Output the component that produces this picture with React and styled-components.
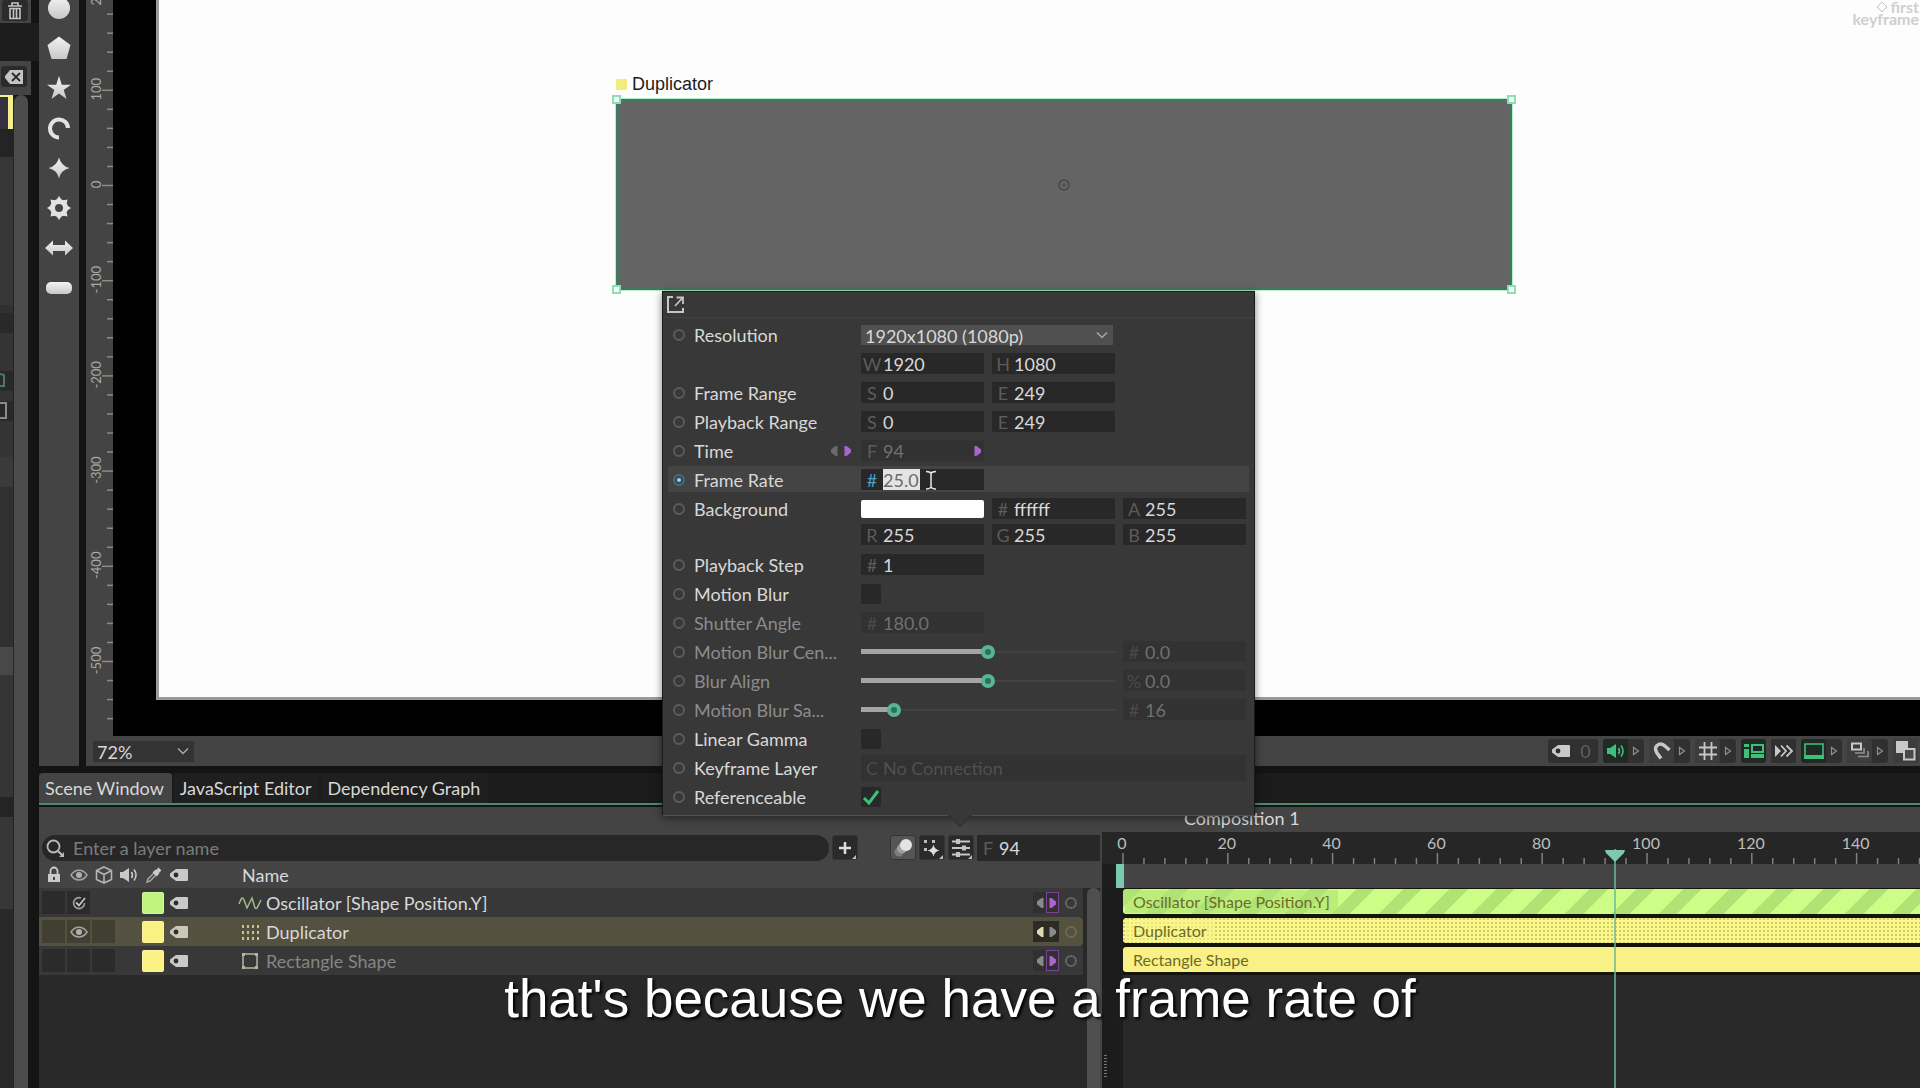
import React, { useState } from "react";
import styled, { createGlobalStyle, css } from "styled-components";

const c = {
  panel: "#444444",
  panelDark: "#383838",
  field: "#282828",
  fieldDim: "#323232",
  gap: "#141414",
  text: "#d8d8d8",
  dim: "#8c8c8c",
  faint: "#5c5c5c",
  green: "#3fc07a",
  teal: "#7cc9b0",
  purple: "#a964cf",
};

const Global = createGlobalStyle`
  *, *::before, *::after { box-sizing: border-box; }
  body { margin: 0; background: #141414; overflow: hidden; }
  button, input, select { font: inherit; color: inherit; margin: 0; padding: 0; border: 0; background: none; outline: 0; }
  button { display: inline-flex; align-items: center; justify-content: center; }
  svg { display: block; flex: none; }
`;

const Shell = styled.div`
  position: relative;
  display: grid;
  grid-template-columns: 39px 1fr;
  height: 100vh;
  overflow: hidden;
  background: ${c.gap};
  color: ${c.text};
  font-family: Lato, "Liberation Sans", sans-serif;
  font-size: 18px;
  line-height: 22px;
`;

/* ---------- left dock ---------- */
const Dock = styled.aside`
  display: flex;
  flex-direction: column;
  min-height: 0;
`;
const DockHeader = styled.div`
  display: flex;
  align-items: flex-start;
  width: 31px;
  height: ${(p) => p.$h}px;
  padding: ${(p) => p.$pad};
  background: ${c.panel};
`;
const DockGap = styled.div`
  height: 38px;
  background: #1d1d1d;
`;
const DockButton = styled.button`
  width: 26px;
  height: 21px;
  border-radius: 3px;
  background: #2b2b2b;
`;
const DockBody = styled.div`
  display: flex;
  flex: 1;
  width: 28px;
`;
const DockSlice = styled.div`
  display: flex;
  flex-direction: column;
  width: 14px;
  background: #292929;
  border-right: 1px solid #242424;
`;
const Slice = styled.div`
  flex: none;
  height: ${(p) => p.$h}px;
  background: ${(p) => p.$bg};
  border-right: ${(p) => (p.$edge ? `5px solid ${p.$edge}` : "0")};
  border-top: ${(p) => (p.$top ? `2px solid ${p.$top}` : "0")};
`;
const DockScroll = styled.div`
  width: 14px;
  border-radius: 7px 7px 0 0;
  background: #4c4c4c;
`;

/* ---------- main column ---------- */
const Main = styled.div`
  display: flex;
  flex-direction: column;
  min-width: 0;
  min-height: 0;
`;
const Viewer = styled.section`
  display: flex;
  flex: 1;
  gap: 7px;
  min-height: 0;
  padding-bottom: 7px;
`;
const ToolRail = styled.nav`
  width: 40px;
  overflow: hidden;
  background: ${c.panel};
`;
const ToolList = styled.div`
  display: flex;
  flex-direction: column;
  margin-top: -12px;
`;
const Tool = styled.button`
  height: 40px;
`;
const ViewerColumn = styled.div`
  display: flex;
  flex: 1;
  flex-direction: column;
  min-width: 0;
`;
const StageRow = styled.div`
  display: flex;
  flex: 1;
  min-height: 0;
`;
const VRuler = styled.div`
  width: 27px;
  overflow: hidden;
  background: ${c.panel};
`;
const Stage = styled.div`
  display: flex;
  flex: 1;
  padding: 0 0 36px 43px;
  background: #000;
`;
const Canvas = styled.div`
  position: relative;
  flex: 1;
  border: solid #9a9a9a;
  border-width: 0 0 3px 3px;
  background: #fdfdfd;
`;
const Shape = styled.div`
  position: absolute;
  left: 457px;
  top: 99px;
  width: 896px;
  height: 191px;
  border: 3px solid #467660;
  outline: 1px solid #b5f0d2;
  background: #646464;
`;
const Handle = styled.i`
  position: absolute;
  width: 9px;
  height: 9px;
  border: 2px solid #8fdcb5;
  background: #effff7;
  ${(p) => p.$y}: -7px;
  ${(p) => p.$x}: -7px;
`;
const ShapeLabel = styled.div`
  position: absolute;
  left: 457px;
  top: 73px;
  display: flex;
  align-items: center;
  gap: 5px;
  color: #1c1c1c;
  font-family: "Liberation Sans", Arial, sans-serif;
`;
const LabelChip = styled.i`
  width: 11px;
  height: 11px;
  background: #f1ec7c;
`;
const Pivot = styled.div`
  position: absolute;
  left: 50%;
  top: 45%;
  transform: translate(-50%, -50%);
`;
const Watermark = styled.div`
  position: absolute;
  right: 1px;
  top: 1px;
  display: flex;
  flex-direction: column;
  align-items: flex-end;
  color: #cfcfcf;
  font-size: 16px;
  font-weight: 700;
  line-height: 12px;
  span {
    display: flex;
    align-items: center;
    gap: 2px;
  }
`;

const StatusBar = styled.footer`
  display: flex;
  align-items: center;
  gap: 5px;
  height: 30px;
  padding: 0 2px 0 7px;
  background: ${c.panel};
`;
const SelectWrap = styled.label`
  display: grid;
  align-items: center;
  width: ${(p) => p.$w}px;
  height: ${(p) => p.$h}px;
  background: ${(p) => p.$bg};
  > * {
    grid-area: 1 / 1;
  }
  svg {
    justify-self: end;
    margin-right: 4px;
    pointer-events: none;
  }
`;
const Select = styled.select`
  appearance: none;
  width: 100%;
  height: 100%;
  padding-left: 4px;
`;
const Spacer = styled.div`
  flex: 1;
`;
const StatusGroup = styled.div`
  display: flex;
  height: 24px;
  border-radius: 3px;
  overflow: hidden;
  background: ${(p) => (p.$on ? "#1f2a24" : "#303030")};
`;
const StatusButton = styled.button`
  width: ${(p) => p.$w || 25}px;
  height: 24px;
  color: ${(p) => p.$color || "#c8c8c8"};
  background: ${(p) => (p.$raised ? "#3d3d3d" : "none")};
`;

/* ---------- bottom dock ---------- */
const Bottom = styled.section`
  display: flex;
  flex: none;
  flex-direction: column;
  height: 315px;
`;
const TabBar = styled.div`
  display: flex;
  gap: 2px;
  height: 32px;
  background: #1c1b1c;
  border-bottom: 2px solid #4d8a6c;
`;
const Tab = styled.button`
  padding: 0 8px 0 6px;
  border-radius: 4px 4px 0 0;
  background: ${(p) => (p.$active ? c.panel : "#1f1f1f")};
`;
const Panes = styled.div`
  display: grid;
  grid-template-columns: 1063fr 818fr;
  flex: 1;
  min-height: 0;
  margin-top: 2px;
`;
const Scene = styled.div`
  display: flex;
  flex-direction: column;
  min-width: 0;
  padding-right: 2px;
  background: ${c.panel};
`;
const Strip = styled.div`
  height: ${(p) => p.$h}px;
  padding: ${(p) => p.$pad || 0};
  background: ${c.panel};
`;
const SearchRow = styled.div`
  display: flex;
  align-items: center;
  gap: 3px;
  height: 27px;
  padding-left: 3px;
`;
const SearchBox = styled.label`
  display: flex;
  flex: 1;
  align-items: center;
  gap: 8px;
  height: 26px;
  padding-left: 3px;
  border-radius: 13px;
  background: #272727;
`;
const SearchInput = styled.input`
  flex: 1;
  min-width: 0;
  &::placeholder {
    color: #7c7c7c;
    opacity: 1;
  }
`;
const SquareButton = styled.button`
  width: 26px;
  height: 25px;
  border: 1px solid #343434;
  border-radius: 3px;
  background: ${(p) => (p.$lit ? "#555" : "#2a2a2a")};
  margin-left: ${(p) => (p.$apart ? 29 : 0)}px;
`;
const LayerHead = styled.div`
  display: flex;
  align-items: center;
  height: 27px;
  padding-left: 2px;
`;
const Cell = styled.div`
  display: flex;
  justify-content: center;
  align-items: center;
  flex: none;
  width: 25px;
  height: 25px;
`;
const ToggleCell = styled.button`
  flex: none;
  width: 23px;
  height: 23px;
  margin: 0 1px;
  background: ${(p) => (p.$show ? "rgba(0,0,0,.22)" : "none")};
`;
const HeadName = styled.span`
  margin-left: 51px;
`;
const ListArea = styled.div`
  display: flex;
  flex: 1;
  background: #292929;
`;
const List = styled.div`
  flex: 1;
`;
const ListScroll = styled.div`
  width: 13px;
  margin-left: 4px;
  border-radius: 6px 6px 0 0;
  background: #4f4f4f;
`;
const LayerRow = styled.div`
  display: flex;
  align-items: center;
  height: 29px;
  padding-left: 2px;
  color: ${(p) => (p.$dim ? "#858585" : c.text)};
  background: ${(p) => (p.$selected ? "#545141" : c.panelDark)};
  border-radius: ${(p) => (p.$selected ? "0 4px 4px 0" : 0)};
`;
const Swatch = styled.button`
  flex: none;
  width: 22px;
  height: 22px;
  margin: 0 2px 0 1px;
  border: 1px solid rgba(255, 255, 255, 0.25);
  border-radius: 2px;
  background: ${(p) => p.$color};
`;
const LayerIcon = styled.span`
  display: flex;
  justify-content: center;
  width: 24px;
  margin: 0 4px 0 47px;
`;
const LayerName = styled.span`
  flex: 1;
  white-space: nowrap;
`;
const KeyNav = styled.div`
  display: flex;
  margin-right: 6px;
`;
const KeyButton = styled.button`
  width: 13px;
  height: 21px;
  border: 1px solid ${(p) => (p.$ring ? "#7b4596" : "transparent")};
  color: ${(p) => p.$color || "#8a8a8a"};
  background: ${(p) => (p.$dark ? "#2b2a24" : "#303030")};
`;
const RingButton = styled.button`
  flex: none;
  width: 12px;
  height: 12px;
  margin-right: ${(p) => p.$mr || 0}px;
  border: 2px solid ${(p) => p.$color || "#646464"};
  border-radius: 50%;
`;

/* ---------- timeline ---------- */
const Timeline = styled.div`
  position: relative;
  display: flex;
  flex-direction: column;
  min-width: 0;
  overflow: hidden;
  background: #292929;
`;
const HRuler = styled.div`
  height: 32px;
  background: #262626;
`;
const WorkArea = styled.div`
  display: flex;
  height: 24px;
  padding-left: 14px;
  background: linear-gradient(90deg, #1d1d1d 14px, ${c.panel} 14px);
  i {
    width: 8px;
    height: 24px;
    background: ${c.teal};
  }
`;
const Tracks = styled.div`
  display: flex;
  flex: 1;
`;
const Gutter = styled.div`
  display: flex;
  flex-direction: column;
  justify-content: flex-end;
  width: 21px;
  padding: 0 0 9px 2px;
  background: #1c1c1c;
  span {
    height: 24px;
    width: 3px;
    background: repeating-linear-gradient(#777 0 1px, transparent 1px 3px);
  }
`;
const Bars = styled.div`
  display: flex;
  flex: 1;
  flex-direction: column;
`;
const BarSlot = styled.div`
  height: 29px;
  padding-top: 1px;
  background: #14150c;
`;
const patterns = {
  stripes: css`
    background: repeating-linear-gradient(135deg, #b0e373 0 13px, #cdfd87 13px 33px);
  `,
  dots: css`
    background: radial-gradient(circle at 1px 1px, #cfca6a 1px, transparent 1px) 0 0 / 4px 4px, #fbf88a;
  `,
  plain: css`
    background: #f9f086;
  `,
};
const Bar = styled.div`
  display: flex;
  align-items: center;
  height: 25px;
  padding-left: 2px;
  border-radius: 3px 0 0 3px;
  font-size: 16px;
  color: #6c6b2c;
  ${(p) => patterns[p.$fill]}
  span {
    padding: 0 8px;
    line-height: 23px;
    background: ${(p) => p.$tint};
  }
`;
const Playhead = styled.div`
  position: absolute;
  top: 42px;
  bottom: 0;
  width: 20px;
  margin-left: -11px;
  pointer-events: none;
  background: linear-gradient(90deg, transparent 9px, rgba(108, 184, 158, 0.75) 9px 11px, transparent 11px);
`;

/* ---------- settings popover ---------- */
const Popover = styled.div`
  position: absolute;
  left: 662px;
  top: 291px;
  width: 593px;
  padding-bottom: 4px;
  border: 1px solid #1a1a1a;
  border-bottom-color: #505050;
  background: ${c.panelDark};
  box-shadow: 0 2px 8px rgba(0, 0, 0, 0.5);
`;
const PopoverHead = styled.div`
  display: flex;
  align-items: center;
  height: 26px;
  margin-bottom: 2px;
  padding-left: 3px;
  border-bottom: 1px solid #424242;
`;
const PopoverTip = styled.div`
  position: absolute;
  top: 100%;
  left: 50%;
  margin-left: -11px;
`;
const Prop = styled.div`
  display: grid;
  grid-template-columns: 21px 167px 1fr;
  align-items: ${(p) => (p.$tight ? "start" : "center")};
  height: ${(p) => (p.$tight ? 27 : 29)}px;
  margin: 0 5px;
  padding: ${(p) => (p.$tight ? "1px 5px 0" : "0 5px")};
  border-radius: 3px;
  color: ${(p) => (p.$dim ? c.dim : c.text)};
  background: ${(p) => (p.$hot ? "linear-gradient(transparent 1px, #444 1px 27px, transparent 27px)" : "none")};
`;
const PropName = styled.span`
  display: flex;
  align-items: center;
  justify-content: space-between;
  padding-right: 7px;
  white-space: nowrap;
`;
const Hints = styled.span`
  display: flex;
  gap: 4px;
`;
const Controls = styled.div`
  display: grid;
  grid-template-columns: repeat(3, 123px);
  align-items: center;
  gap: 8px;
`;
const FieldBox = styled.label`
  display: flex;
  align-items: center;
  grid-column: ${(p) => p.$col || "auto"};
  width: ${(p) => (p.$w ? `${p.$w}px` : "auto")};
  height: ${(p) => p.$h || 21}px;
  color: ${(p) => (p.$dim ? "#707070" : c.text)};
  background: ${(p) => (p.$dim ? c.fieldDim : c.field)};
`;
const Prefix = styled.span`
  flex: none;
  width: 22px;
  text-align: center;
  color: ${(p) => p.$color || c.faint};
`;
const FieldInput = styled.input`
  flex: ${(p) => (p.$selected ? "0 0 37px" : 1)};
  min-width: 0;
  width: 37px;
  height: 21px;
  color: ${(p) => p.$color || "inherit"};
  ${(p) =>
    p.$selected &&
    css`
      color: #6a6a6a;
      background: #e4e4e4;
    `}
`;
const ColorWell = styled.button`
  height: 18px;
  border-radius: 2px;
  background: #fff;
`;
const CheckWrap = styled.span`
  display: grid;
  width: 20px;
  height: 20px;
  > * {
    grid-area: 1 / 1;
  }
  svg {
    pointer-events: none;
  }
`;
const Check = styled.input`
  appearance: none;
  width: 20px;
  height: 20px;
  border-radius: 2px;
  background: ${c.field};
`;
const Slider = styled.input`
  appearance: none;
  grid-column: span 2;
  width: 100%;
  height: 16px;
  background:
    linear-gradient(#a4a4a4, #a4a4a4) 0 50% / ${(p) => p.$fill}px 5px no-repeat,
    linear-gradient(#424242, #424242) 0 50% / 100% 2px no-repeat;
  &::-webkit-slider-thumb {
    appearance: none;
    width: 14px;
    height: 14px;
    border: 4px solid #58b493;
    border-radius: 50%;
    background: #2f6f58;
  }
`;

const Caption = styled.p`
  position: absolute;
  left: 0;
  right: 0;
  bottom: 59px;
  margin: 0;
  color: #fff;
  font-family: "Liberation Sans", Arial, sans-serif;
  font-size: 53px;
  line-height: 60px;
  text-align: center;
  text-shadow: 2px 2px 3px #000;
  pointer-events: none;
`;

/* ---------- drawings ---------- */
const Svg = ({ w = 20, h = w, vb, children }) => (
  <svg width={w} height={h} viewBox={vb || `0 0 ${w} ${h}`} fill="none" aria-hidden="true">
    {children}
  </svg>
);
const TagIcon = ({ color = "#c9c9c9" }) => (
  <Svg w={20} h={14}>
    <path d="M7 1h11a1 1 0 0 1 1 1v10a1 1 0 0 1-1 1H7L1 8.500v-3z" fill={color} />
    <circle cx="7" cy="7" r="2.4" fill="#2c2c2c" />
  </Svg>
);
const EyeIcon = () => (
  <Svg w={18} h={14}>
    <path d="M1 7c4-6.500 12-6.500 16 0-4 6.500-12 6.500-16 0z" stroke="#a4a4a4" strokeWidth="1.500" />
    <circle cx="9" cy="7" r="3" fill="#b0b0b0" />
  </Svg>
);
const EyeCheckIcon = () => (
  <Svg w={16}>
    <path d="M13.500 8A5.500 5.500 0 1 1 10 3" stroke="#a2a2a2" strokeWidth="1.600" />
    <path d="M5 7.500l3 3L14 3" stroke="#c4c4c4" strokeWidth="1.800" />
  </Svg>
);
const SpeakerIcon = ({ color = "#c9c9c9" }) => (
  <Svg w={20} h={18}>
    <path d="M1 6h3l6-4v14l-6-4H1z" fill={color} />
    <path d="M12.500 6q2 3 0 6M15 3.500q4 5.500 0 11" stroke={color} strokeWidth="1.600" />
  </Svg>
);
const LeftKey = () => (
  <Svg w={8} h={12}>
    <path d="M7.500 1v10H5.500L1 7.500v-3L5.500 1z" fill="currentColor" />
  </Svg>
);
const RightKey = () => (
  <Svg w={8} h={12}>
    <path d="M.5 1v10h2L7 7.500v-3L2.500 1z" fill="currentColor" />
  </Svg>
);
const Chevron = () => (
  <Svg w={14} h={9}>
    <path d="M2 1.500l5 5 5-5" stroke="#a8a8a8" strokeWidth="1.500" />
  </Svg>
);
const MenuArrow = () => (
  <Svg w={8} h={10}>
    <path d="M1.500 1.500v7L6.500 5z" stroke="#8e8e8e" strokeWidth="1.200" />
  </Svg>
);

const toolShapes = [
  ["Ellipse", <circle cx="14" cy="12" r="11" fill="url(#tool)" />],
  ["Polygon", <path d="M14 .5l11.500 8.500-4 14H6.500l-4-14z" fill="url(#tool)" />],
  ["Star", <path d="M14 0l2.800 8.700H26l-7.300 5.300 2.900 9L14 17.500 6.400 23l2.900-9L2 8.700h9.200z" fill="url(#tool)" />],
  ["Arc", <path d="M14 21.500A9 9 0 1 1 23 12" stroke="#e2e2e2" strokeWidth="4" />],
  ["Spark", <path d="M14 1.500q2 8.500 10.500 10.500Q16 14 14 22.500 12 14 3.500 12 12 10 14 1.500z" fill="url(#tool)" />],
  [
    "Cog",
    <>
      <circle cx="14" cy="12" r="6.500" stroke="#e2e2e2" strokeWidth="5" />
      {[0, 45, 90, 135, 180, 225, 270, 315].map((a) => (
        <path key={a} d="M11 4.500L14 0l3 4.500z" fill="#e2e2e2" transform={`rotate(${a} 14 12)`} />
      ))}
    </>,
  ],
  ["Arrow", <path d="M0 12l8-7.500V9h12V4.500L28 12l-8 7.500V15H8v4.500z" fill="url(#tool)" />],
  ["Capsule", <rect x="1" y="6" width="26" height="12" rx="5" fill="url(#tool)" />],
];

function Tools() {
  return (
    <ToolRail aria-label="Shape tools">
      <ToolList>
        {toolShapes.map(([name, art]) => (
          <Tool key={name} aria-label={name}>
            <Svg w={28} h={24}>
              <defs>
                <linearGradient id="tool" x1="0" y1="0" x2="0" y2="1">
                  <stop offset="0" stopColor="#f2f2f2" />
                  <stop offset="1" stopColor="#c8c8c8" />
                </linearGradient>
              </defs>
              {art}
            </Svg>
          </Tool>
        ))}
      </ToolList>
    </ToolRail>
  );
}

function VerticalRuler() {
  const at = (v) => 185.5 - v * 0.952;
  const ticks = [];
  for (let v = 180; v >= -560; v -= 20) ticks.push(v);
  return (
    <VRuler>
      <svg width="27" height="736">
        {ticks.map((v) => (
          <line key={v} x1={v % 100 ? 21 : 16} x2="27" y1={at(v)} y2={at(v)} stroke="#8b8b8b" strokeWidth="1.500" />
        ))}
        {[200, 100, 0, -100, -200, -300, -400, -500].map((v) => (
          <text
            key={v}
            transform={`translate(15 ${at(v) - 1}) rotate(-90)`}
            textAnchor="middle"
            fontSize="13"
            fill="#a9a9a9"
          >
            {v}
          </text>
        ))}
      </svg>
    </VRuler>
  );
}

function HorizontalRuler() {
  const at = (f) => 21 + f * 5.24;
  const ticks = [];
  for (let f = 0; f <= 240; f += 4) ticks.push(f);
  return (
    <HRuler>
      <svg width="100%" height="32">
        {ticks.map((f) => (
          <line key={f} x1={at(f)} x2={at(f)} y1={f % 20 ? 26 : 21} y2="32" stroke="#808080" strokeWidth="1.500" />
        ))}
        {ticks
          .filter((f) => f % 20 === 0)
          .map((f) => (
            <text key={f} x={at(f) - 1} y="17" textAnchor="middle" fontSize="16" fill="#bdbdbd">
              {f}
            </text>
          ))}
      </svg>
    </HRuler>
  );
}

function Field({ prefix, value, name, dim, col, w, h, hot, color }) {
  return (
    <FieldBox $dim={dim} $col={col} $w={w} $h={h}>
      <Prefix $color={hot ? "#4a9fc4" : dim ? "#4a4a4a" : undefined}>{prefix}</Prefix>
      <FieldInput aria-label={name} defaultValue={value} $selected={hot} $color={color} />
      {hot && (
        <Svg w={24} h={20}>
          <path d="M6 1.500q4 0 5 2 1-2 5-2M6 19q4 0 5-2 1 2 5 2M11 3v14" stroke="#e6e6e6" strokeWidth="1.500" />
        </Svg>
      )}
    </FieldBox>
  );
}

function Row({ label, children, hints, on, ...rest }) {
  return (
    <Prop {...rest}>
      {label ? (
        <RingButton aria-label={`Key ${label}`} $color={on ? "#3c6f84" : "#5c5c5c"}>
          {on && (
            <Svg w={6}>
              <circle cx="3" cy="3" r="2" fill="#8fd6ea" />
            </Svg>
          )}
        </RingButton>
      ) : (
        <span />
      )}
      <PropName>
        {label}
        {hints}
      </PropName>
      <Controls>{children}</Controls>
    </Prop>
  );
}

function Tick({ name, initial }) {
  const [on, setOn] = useState(initial);
  return (
    <CheckWrap>
      <Check type="checkbox" aria-label={name} checked={on} onChange={() => setOn(!on)} />
      {on && (
        <Svg w={20}>
          <path d="M3 11l5 5L17 4" stroke={c.green} strokeWidth="3" />
        </Svg>
      )}
    </CheckWrap>
  );
}

function SlideRow({ label, at, prefix, value }) {
  const [v, setV] = useState(at);
  return (
    <Row label={label} $dim>
      <Slider
        type="range"
        aria-label={label}
        value={v}
        onChange={(e) => setV(Number(e.target.value))}
        $fill={Math.round(7 + v * 2.39)}
      />
      <Field prefix={prefix} value={value} name={`${label} value`} dim />
    </Row>
  );
}

const PurpleKey = styled.span`
  display: flex;
  margin-left: auto;
  padding-right: 2px;
  color: ${(p) => p.$color || c.purple};
`;

function Settings() {
  return (
    <Popover role="dialog" aria-label="Composition settings">
      <PopoverHead>
        <button aria-label="Open in window">
          <Svg w={19}>
            <path d="M7 2H2v15h15v-4" stroke="#c6c6c6" strokeWidth="2" />
            <path d="M9 11l7-7.500M10.500 2.500h6.500V9" stroke="#c6c6c6" strokeWidth="1.800" />
          </Svg>
        </button>
      </PopoverHead>
      <Row label="Resolution">
        <SelectWrap $w={252} $h={20} $bg="#505050">
          <Select aria-label="Resolution" defaultValue="1080p">
            <option value="1080p">1920x1080 (1080p)</option>
          </Select>
          <Chevron />
        </SelectWrap>
      </Row>
      <Row>
        <Field prefix="W" value="1920" name="Width" />
        <Field prefix="H" value="1080" name="Height" />
      </Row>
      <Row label="Frame Range">
        <Field prefix="S" value="0" name="Range start" />
        <Field prefix="E" value="249" name="Range end" />
      </Row>
      <Row label="Playback Range">
        <Field prefix="S" value="0" name="Playback start" />
        <Field prefix="E" value="249" name="Playback end" />
      </Row>
      <Row
        label="Time"
        hints={
          <Hints>
            <PurpleKey $color="#6a6a6a">
              <LeftKey />
            </PurpleKey>
            <PurpleKey>
              <RightKey />
            </PurpleKey>
          </Hints>
        }
      >
        <FieldBox $dim>
          <Prefix>F</Prefix>
          <FieldInput aria-label="Time" defaultValue="94" />
          <PurpleKey>
            <RightKey />
          </PurpleKey>
        </FieldBox>
      </Row>
      <Row label="Frame Rate" $hot on>
        <Field prefix="#" value="25.0" name="Frame Rate" hot />
      </Row>
      <Row label="Background">
        <ColorWell aria-label="Background colour" />
        <Field prefix="#" value="ffffff" name="Hex" />
        <Field prefix="A" value="255" name="Alpha" />
      </Row>
      <Row $tight>
        <Field prefix="R" value="255" name="Red" />
        <Field prefix="G" value="255" name="Green" />
        <Field prefix="B" value="255" name="Blue" />
      </Row>
      <Row label="Playback Step">
        <Field prefix="#" value="1" name="Playback Step" />
      </Row>
      <Row label="Motion Blur">
        <Tick name="Motion Blur" initial={false} />
      </Row>
      <Row label="Shutter Angle" $dim>
        <Field prefix="#" value="180.0" name="Shutter Angle" dim />
      </Row>
      <SlideRow label="Motion Blur Cen..." at={50} prefix="#" value="0.0" />
      <SlideRow label="Blur Align" at={50} prefix="%" value="0.0" />
      <SlideRow label="Motion Blur Sa..." at={11} prefix="#" value="16" />
      <Row label="Linear Gamma">
        <Tick name="Linear Gamma" initial={false} />
      </Row>
      <Row label="Keyframe Layer">
        <Field prefix="C" value="No Connection" name="Keyframe Layer" dim col="span 3" h={26} color="#505050" />
      </Row>
      <Row label="Referenceable">
        <Tick name="Referenceable" initial />
      </Row>
      <PopoverTip>
        <Svg w={24} h={12}>
          <path d="M0 0h24L12 12z" fill={c.panelDark} />
          <path d="M0 0l12 11L24 0" stroke="#2c2c2c" />
        </Svg>
      </PopoverTip>
    </Popover>
  );
}

const statusGroups = [
  {
    name: "Sound",
    on: true,
    icon: <SpeakerIcon color={c.green} />,
    menu: true,
  },
  {
    name: "Snapping",
    raised: true,
    icon: (
      <Svg w={20}>
        <path d="M9 17.500L5 12Q1.500 6 6.500 3.500q3.500-1.500 7 2L17.500 9" stroke="currentColor" strokeWidth="3.500" />
      </Svg>
    ),
    menu: true,
  },
  {
    name: "Grid",
    raised: true,
    icon: (
      <Svg w={20}>
        <path d="M6.500 1v18M13.500 1v18M1 6.500h18M1 13.500h18" stroke="currentColor" strokeWidth="1.800" />
      </Svg>
    ),
    menu: true,
  },
  {
    name: "Layout",
    on: true,
    icon: (
      <Svg w={22} h={18}>
        <path d="M1 2h5v3H1zM1 7h5v9H1zM8 12h13v4H8z" fill={c.green} />
        <path d="M9 3h11v7H9z" stroke={c.green} strokeWidth="2" />
      </Svg>
    ),
  },
  {
    name: "Fast draw",
    icon: (
      <Svg w={20} h={14}>
        <path d="M1 1l6 6-6 6z" fill="currentColor" />
        <path d="M7 1.500L12 7l-5 5.500M12.500 1.500L18 7l-5.500 5.500" stroke="currentColor" strokeWidth="1.800" />
      </Svg>
    ),
  },
  {
    name: "Screen",
    on: true,
    icon: (
      <Svg w={22} h={18}>
        <path d="M2 2h18v12H2z" stroke={c.green} strokeWidth="1.600" />
        <path d="M1 13h20v4H1z" fill={c.green} />
      </Svg>
    ),
    menu: true,
  },
  {
    name: "Layers",
    raised: true,
    icon: (
      <Svg w={20} h={18}>
        <path d="M2 1.500h9v6H2z" stroke="currentColor" strokeWidth="2" />
        <path d="M5 11h9V6M8 14.500h10V9" stroke="#909090" strokeWidth="1.600" />
      </Svg>
    ),
    menu: true,
  },
  {
    name: "Channels",
    raised: true,
    icon: (
      <Svg w={20}>
        <path d="M0 0h12v12H0z" fill="currentColor" />
        <path d="M8 8h10.500v10.500H8z" fill="#4a4a4a" stroke="currentColor" strokeWidth="2" />
      </Svg>
    ),
  },
];

const TagCount = styled.span`
  width: 25px;
  text-align: center;
  line-height: 24px;
  color: #5f5f5f;
`;

const layers = [
  {
    name: "Oscillator [Shape Position.Y]",
    color: "#bff57f",
    eye: <EyeCheckIcon />,
    cells: 2,
    fill: "stripes",
    tint: "rgba(176,227,115,.6)",
    icon: (
      <Svg w={24} h={16}>
        <path d="M1 9q2-5 3-6 1-.5 2 2l3 8 5-10 3 10q1 1 2 0l4-8" stroke="#a3b98a" strokeWidth="1.500" />
      </Svg>
    ),
  },
  {
    name: "Duplicator",
    color: "#fbf183",
    eye: <EyeIcon />,
    cells: 3,
    selected: true,
    fill: "dots",
    tint: "rgba(249,247,138,.6)",
    icon: (
      <Svg w={18}>
        {[2, 7, 12, 17].map((x) =>
          [3, 9, 15].map((y) => <rect key={`${x}-${y}`} x={x - 1} y={y - 1} width="2" height="3" fill="#c9c67c" />)
        )}
      </Svg>
    ),
  },
  {
    name: "Rectangle Shape",
    color: "#fbf183",
    cells: 3,
    dim: true,
    fill: "plain",
    tint: "none",
    icon: (
      <Svg w={18}>
        <path d="M2 2h14v14H2z" stroke="#b5b5a0" strokeWidth="1.500" />
        <path d="M1 1h3v3H1zM14 1h3v3h-3zM1 14h3v3H1zM14 14h3v3h-3z" fill="#b5b5a0" />
      </Svg>
    ),
  },
];

function SceneWindow() {
  return (
    <Scene>
      <Strip $h={27} />
      <SearchRow>
        <SearchBox>
          <Svg w={20}>
            <circle cx="8.500" cy="8.500" r="6" stroke="#b8b8b8" strokeWidth="1.800" />
            <path d="M13 13l4 4" stroke="#b8b8b8" strokeWidth="2" />
            <path d="M19 14v5h-5z" fill="#b8b8b8" />
          </Svg>
          <SearchInput aria-label="Search layers" placeholder="Enter a layer name" />
        </SearchBox>
        <SquareButton aria-label="Add layer">
          <Svg w={24}>
            <path d="M12 6v12M6 12h12" stroke="#dedede" strokeWidth="2.500" />
            <path d="M23 19v4h-4z" fill="#bbb" />
          </Svg>
        </SquareButton>
        <SquareButton aria-label="Motion blur" $apart $lit>
          <Svg w={22}>
            <circle cx="7" cy="15" r="4.500" fill="#7c7c7c" />
            <circle cx="10" cy="11.500" r="5" fill="#a0a0a0" />
            <circle cx="14" cy="8" r="6" fill="#e4e4e4" />
          </Svg>
        </SquareButton>
        <SquareButton aria-label="Add effect">
          <Svg w={24}>
            <path d="M4 4h3v3H4zM12 4h3v3h-3zM4 12h3v3H4z" fill="#bcbcbc" />
            <path d="M13.500 8.500q1 5 6 6-5 1-6 6-1-5-6-6 5-1 6-6z" fill="#dedede" />
            <path d="M23 19v4h-4z" fill="#bbb" />
          </Svg>
        </SquareButton>
        <SquareButton aria-label="Composition settings">
          <Svg w={24}>
            <path d="M3 5.500h18M3 12h18M3 18.500h18" stroke="#c4c4c4" strokeWidth="2" />
            <path d="M7 3h4v5H7zM13 9.500h4v5h-4zM7 16h4v5H7z" fill="#c4c4c4" />
            <path d="M23 19v4h-4z" fill="#bbb" />
          </Svg>
        </SquareButton>
        <Field prefix="F" value="94" name="Current frame" w={123} h={26} />
      </SearchRow>
      <LayerHead>
        <Cell>
          <Svg w={14} h={18}>
            <path d="M3.500 8V5a3.500 3.500 0 0 1 7 0v3" stroke="#c9c9c9" strokeWidth="1.800" />
            <path d="M1 8h12v8H1z" fill="#c9c9c9" />
            <path d="M6 11h2v3H6z" fill="#444" />
          </Svg>
        </Cell>
        <Cell>
          <EyeIcon />
        </Cell>
        <Cell>
          <Svg w={18}>
            <path d="M9 1l7.500 3.500v9L9 17l-7.500-3.500v-9zM1.500 4.500L9 8.500l7.500-4M9 8.500V17" stroke="#b4b4b4" strokeWidth="1.600" />
          </Svg>
        </Cell>
        <Cell>
          <SpeakerIcon />
        </Cell>
        <Cell>
          <Svg w={18}>
            <path d="M2 16l1-3 6-6 2 2-6 6z" stroke="#a4a4a4" strokeWidth="1.500" />
            <path d="M9 5l4 4M11 7l4-4" stroke="#c9c9c9" strokeWidth="4" />
          </Svg>
        </Cell>
        <Cell>
          <TagIcon />
        </Cell>
        <HeadName>Name</HeadName>
      </LayerHead>
      <ListArea>
        <List>
          {layers.map((l) => (
            <LayerRow key={l.name} $dim={l.dim} $selected={l.selected}>
              <ToggleCell $show aria-label={`Lock ${l.name}`} />
              <ToggleCell $show aria-label={`Show ${l.name}`}>
                {l.eye}
              </ToggleCell>
              <ToggleCell $show={l.cells > 2} aria-label={`Solo ${l.name}`} />
              <Cell />
              <Swatch $color={l.color} aria-label={`Colour ${l.name}`} />
              <Cell>
                <TagIcon color={l.selected ? "#c9c8b6" : "#c9c9c9"} />
              </Cell>
              <LayerIcon>{l.icon}</LayerIcon>
              <LayerName>{l.name}</LayerName>
              <KeyNav>
                <KeyButton aria-label="Previous key" $dark={l.selected} $color={l.selected ? "#dedcae" : undefined}>
                  <LeftKey />
                </KeyButton>
                <KeyButton
                  aria-label="Next key"
                  $dark={l.selected}
                  $ring={!l.selected}
                  $color={l.selected ? undefined : c.purple}
                >
                  <RightKey />
                </KeyButton>
              </KeyNav>
              <RingButton aria-label="Connections" $mr={6} $color={l.selected ? "#6e6a4c" : undefined} />
            </LayerRow>
          ))}
        </List>
        <ListScroll />
      </ListArea>
    </Scene>
  );
}

function TimelinePane() {
  const frame = 94;
  return (
    <Timeline>
      <Strip $h={25} $pad="0 0 0 82px">
        Composition 1
      </Strip>
      <HorizontalRuler />
      <WorkArea>
        <i />
      </WorkArea>
      <Tracks>
        <Gutter>
          <span />
        </Gutter>
        <Bars>
          {layers.map((l) => (
            <BarSlot key={l.name}>
              <Bar $fill={l.fill} $tint={l.tint}>
                <span>{l.name}</span>
              </Bar>
            </BarSlot>
          ))}
        </Bars>
      </Tracks>
      <Playhead style={{ left: 21 + frame * 5.24 }}>
        <Svg w={20} h={14}>
          <path d="M0 1h20l-1 3-9 9L1 4z" fill={c.teal} />
        </Svg>
      </Playhead>
    </Timeline>
  );
}

function LeftDock() {
  return (
    <Dock>
      <DockHeader $h={23} $pad="0 0 0 2px">
        <DockButton aria-label="Delete">
          <Svg w={16} h={18}>
            <path d="M1 4h14M5 3.500V1h6v2.500" stroke="#c4c4c4" strokeWidth="1.600" />
            <path d="M3 6.500h10v10H3zM6.500 7v9M9.500 7v9" stroke="#c4c4c4" strokeWidth="1.600" />
          </Svg>
        </DockButton>
      </DockHeader>
      <DockGap />
      <DockHeader $h={34} $pad="5px 0 0 1px">
        <DockButton aria-label="Clear search">
          <Svg w={20} h={16}>
            <path d="M6 1h13v14H6L1 9V7z" fill="#c4c4c4" />
            <path d="M8 4l8 8M16 4l-8 8" stroke="#2b2b2b" strokeWidth="1.800" />
          </Svg>
        </DockButton>
      </DockHeader>
      <DockBody>
        <DockSlice>
          <Slice $h={34} $bg="#34303f" $edge="#f4f08d" $top="#f4f08d" />
          <Slice $h={28} $bg="#242424" />
          <Slice $h={148} $bg="#373737" />
          <Slice $h={8} $bg="#303030" />
          <Slice $h={20} $bg="#292929" />
          <Slice $h={38} $bg="#343434" />
          <Svg w={13} h={20}>
            <path d="M0 3l4 1v11H0" stroke="#4d7a5d" strokeWidth="2" />
          </Svg>
          <Slice $h={10} $bg="#343434" />
          <Svg w={13} h={20}>
            <path d="M0 2h6v15H0" stroke="#8b8b8b" strokeWidth="2" />
          </Svg>
          <Slice $h={36} $bg="#343434" />
          <Slice $h={30} $bg="#3a3a3a" />
          <Slice $h={160} $bg="#303030" />
          <Slice $h={28} $bg="#484848" />
          <Slice $h={122} $bg="#353535" />
          <Slice $h={20} $bg="#242424" />
          <Slice $h={92} $bg="#373737" />
        </DockSlice>
        <DockScroll />
      </DockBody>
    </Dock>
  );
}

export default function App() {
  return (
    <Shell>
      <Global />
      <LeftDock />
      <Main>
        <Viewer>
          <Tools />
          <ViewerColumn>
            <StageRow>
              <VerticalRuler />
              <Stage>
                <Canvas>
                  <ShapeLabel>
                    <LabelChip />
                    Duplicator
                  </ShapeLabel>
                  <Shape>
                    <Handle $x="left" $y="top" />
                    <Handle $x="right" $y="top" />
                    <Handle $x="left" $y="bottom" />
                    <Handle $x="right" $y="bottom" />
                    <Pivot>
                      <Svg w={14}>
                        <circle cx="7" cy="7" r="5" stroke="#474747" strokeWidth="1.500" />
                        <path d="M5 7h4M7 5v4" stroke="#4d4d4d" />
                      </Svg>
                    </Pivot>
                  </Shape>
                  <Watermark>
                    <span>
                      <Svg w={12}>
                        <path d="M6 1l5 5-5 5-5-5z" stroke="#c4c4c4" />
                      </Svg>
                      first
                    </span>
                    <span>keyframe</span>
                  </Watermark>
                </Canvas>
              </Stage>
            </StageRow>
            <StatusBar>
              <SelectWrap $w={101} $h={21} $bg="#333333">
                <Select aria-label="Zoom" defaultValue="72">
                  <option value="72">72%</option>
                </Select>
                <Chevron />
              </SelectWrap>
              <Spacer />
              <StatusGroup>
                <StatusButton aria-label="Tag filter">
                  <TagIcon />
                </StatusButton>
                <TagCount>0</TagCount>
              </StatusGroup>
              {statusGroups.map((g) => (
                <StatusGroup key={g.name}>
                  <StatusGroup $on={g.on}>
                    <StatusButton aria-label={g.name} $raised={g.raised}>
                      {g.icon}
                    </StatusButton>
                  </StatusGroup>
                  {g.menu && (
                    <StatusButton aria-label={`${g.name} options`} $w={16}>
                      <MenuArrow />
                    </StatusButton>
                  )}
                </StatusGroup>
              ))}
            </StatusBar>
          </ViewerColumn>
        </Viewer>
        <Bottom>
          <TabBar>
            <Tab $active>Scene Window</Tab>
            <Tab>JavaScript Editor</Tab>
            <Tab>Dependency Graph</Tab>
          </TabBar>
          <Panes>
            <SceneWindow />
            <TimelinePane />
          </Panes>
        </Bottom>
      </Main>
      <Settings />
      <Caption>that's because we have a frame rate of</Caption>
    </Shell>
  );
}
